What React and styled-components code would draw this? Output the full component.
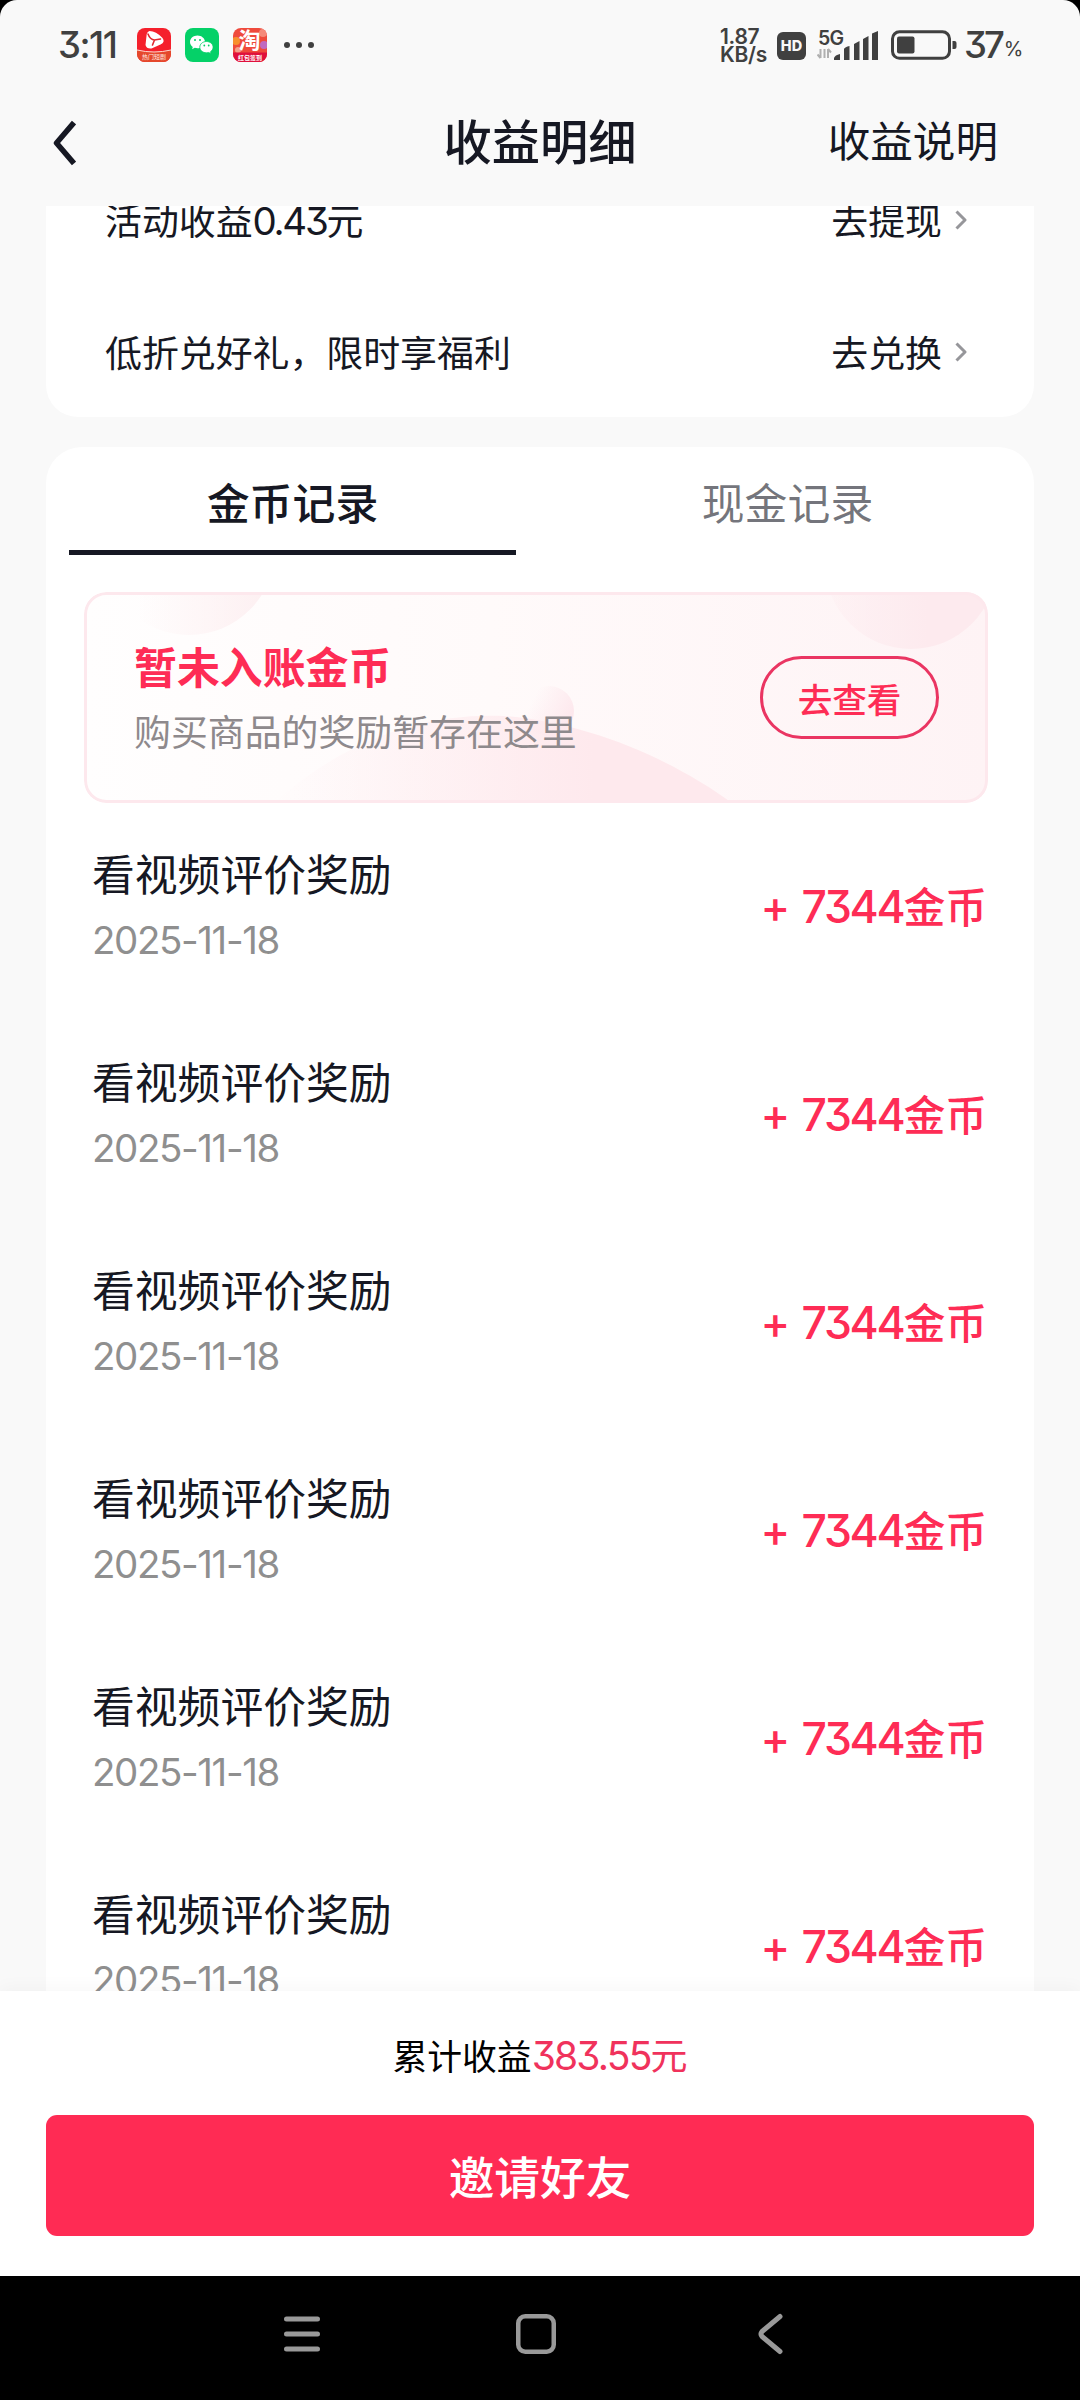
import React from "react";
import styled, { createGlobalStyle, css } from "styled-components";

const CJK = `"Noto Sans CJK SC", sans-serif`;
const LATIN = `Inter, "Noto Sans CJK SC", sans-serif`;
const RED = "#fe2c55";
const INK = "#161823";

const Global = createGlobalStyle`
  *, *::before, *::after { box-sizing: border-box; }
  html, body { margin: 0; padding: 0; background: #000; }
  body { font-family: ${CJK}; color: ${INK}; }
  button { font: inherit; color: inherit; background: none; border: 0; padding: 0; }
`;

const Screen = styled.div`
  width: 1080px;
  height: 2400px;
  display: flex;
  flex-direction: column;
  overflow: hidden;
  background: #f9f9f9;
  clip-path: inset(0 round 17px 17px 0 0);
`;

const Num = styled.span`
  font-family: ${LATIN};
  font-feature-settings: "cv09";
  font-size: ${(p) => p.$size}px;
  letter-spacing: ${(p) => p.$track || 0}px;
  line-height: 0;
`;

const StatusBar = styled.header`
  flex: none;
  height: 90px;
  padding: 0 59px 0 58px;
  display: flex;
  align-items: center;
  color: #404040;
`;

const Clock = styled.div`
  width: 79px;
  font: 500 36.5px/94px ${LATIN};
  font-feature-settings: "cv09";
  letter-spacing: -1.5px;
  white-space: nowrap;
`;

const AppIcons = styled.div`
  display: flex;
  align-items: center;
  gap: 14px;
`;

const Dots = styled.div`
  display: flex;
  gap: 6px;
  margin-left: 17px;
  i { width: 6px; height: 6px; border-radius: 50%; background: #404040; }
`;

const StatusRight = styled.div`
  margin-left: auto;
  display: flex;
  align-items: center;
`;

const Speed = styled.div`
  width: 51px;
  margin-top: 2px;
  font: 600 21px/18px ${LATIN};
  letter-spacing: -0.3px;
  text-align: left;
  white-space: nowrap;
`;

const HdBadge = styled.div`
  width: 29px;
  height: 28px;
  margin: 1px 0 0 6px;
  border-radius: 6px;
  background: #404040;
  color: #f8f8f8;
  font: 800 14.5px/28px ${LATIN};
  text-align: center;
`;

const SignalBox = styled.svg`
  margin: 0 0 0 11px;
`;

const BatteryIcon = styled.svg`
  margin-left: 13px;
`;

const Percent = styled.div`
  margin-left: 7px;
  width: 57px;
  display: flex;
  align-items: baseline;
  font: 500 36.5px/94px ${LATIN};
  font-feature-settings: "cv09";
  letter-spacing: -3px;
  small { font-size: 20px; font-weight: 400; letter-spacing: 0; margin-left: 2px; line-height: 0; position: relative; top: -2px; }
`;

const NavBar = styled.nav`
  flex: none;
  height: 116px;
  padding: 0 82px 0 52px;
  display: grid;
  grid-template-columns: 1fr auto 1fr;
  align-items: start;
`;

const BackButton = styled.button`
  height: 106px;
  display: flex;
  align-items: center;
`;

const NavTitle = styled.h1`
  margin: 0;
  padding-left: 30px;
  font-size: 48.3px;
  font-weight: 500;
  line-height: 99px;
`;

const NavAction = styled.button`
  justify-self: end;
  font-size: 42.6px;
  line-height: 98px;
`;

const Content = styled.main`
  flex: 1;
  min-height: 0;
  padding: 0 46px;
  overflow: hidden;
  display: flex;
  flex-direction: column;
  gap: 30px;
`;

const SummaryCard = styled.section`
  flex: none;
  height: 211px;
  padding: 0 67px 0 59px;
  display: flex;
  flex-direction: column;
  justify-content: flex-end;
  background: #fff;
  border-radius: 0 0 32px 32px;
  overflow: hidden;
`;

const SummaryRow = styled.div`
  flex: none;
  height: 132px;
  display: flex;
  align-items: center;
  justify-content: space-between;
  font-size: 36.9px;
  line-height: 52px;
  white-space: nowrap;
  padding-bottom: 1px;
`;

const RowAction = styled.button`
  display: flex;
  align-items: center;
  gap: 13px;
  svg { margin-top: 2px; }
`;

const RecordsCard = styled.section`
  flex: none;
  padding: 0 46px 0 46px;
  background: #fff;
  border-radius: 36px 36px 0 0;
`;

const Tabs = styled.div`
  display: grid;
  grid-template-columns: 1fr 1fr;
  gap: 48px;
  margin: 0 -23px;
`;

const Tab = styled.button`
  height: 108px;
  font-size: 42.9px;
  line-height: 109px;
  color: rgba(22, 24, 35, 0.6);
  ${(p) =>
    p.$active &&
    css`
      color: ${INK};
      font-weight: 500;
      box-shadow: inset 0 -5px 0 ${INK};
    `}
`;

const Banner = styled.div`
  position: relative;
  height: 211px;
  margin: 37px 0 0 -8px;
  padding: 0 49px 0 50px;
  display: flex;
  align-items: center;
  justify-content: space-between;
  border-radius: 22px;
  overflow: hidden;
`;

const BannerArt = styled.svg`
  position: absolute;
  inset: 0;
`;

const BannerText = styled.div`
  position: relative;
  margin-top: -1px;
`;

const BannerTitle = styled.div`
  font-size: 42.9px;
  font-weight: 700;
  line-height: 66px;
  color: ${RED};
`;

const BannerNote = styled.div`
  font-size: 36.9px;
  line-height: 64px;
  color: #8e898c;
`;

const BannerButton = styled.button`
  position: relative;
  width: 179px;
  height: 83px;
  border: 3px solid #ea3562;
  border-radius: 42px;
  font-size: 34.6px;
  font-weight: 500;
  line-height: 74px;
  color: ${RED};
`;

const Records = styled.ul`
  list-style: none;
  margin: 0;
  padding: 0 1px 0 0;
`;

const Record = styled.li`
  height: 208px;
  display: flex;
  align-items: center;
  justify-content: space-between;
`;

const RecordTitle = styled.div`
  font-size: 42.8px;
  line-height: 61px;
`;

const RecordDate = styled.div`
  height: 69px;
  font: 400 38.5px/74px ${LATIN};
  letter-spacing: -1.4px;
  color: #8f8f8f;
`;

const Amount = styled.div`
  margin-top: -5px;
  font-size: 41.8px;
  font-weight: 500;
  color: ${RED};
  white-space: pre;
  word-spacing: 4px;
`;

const Footer = styled.footer`
  position: relative;
  flex: none;
  height: 285px;
  padding: 0 46px;
  display: flex;
  flex-direction: column;
  background: #fff;
  box-shadow: 0 -4px 16px rgba(0, 0, 0, 0.03);
`;

const Total = styled.div`
  height: 124px;
  font-size: 34.8px;
  line-height: 128px;
  text-align: center;
  color: #000;
  white-space: nowrap;
  em { font-style: normal; font-size: 37px; line-height: 0; color: #f0325c; }
`;

const InviteButton = styled.button`
  height: 121px;
  border-radius: 11px;
  background: #ff2b54;
  color: #fff;
  font-size: 45.7px;
  font-weight: 500;
  line-height: 113px;
`;

const SystemNav = styled.div`
  flex: none;
  height: 124px;
  padding: 0 295px 8px 283px;
  display: grid;
  grid-template-columns: 233px 1fr auto;
  align-items: center;
  background: #000;
`;

const VideoAppIcon = () => (
  <svg width="34" height="34" viewBox="0 0 34 34">
    <rect width="34" height="34" rx="8" fill="#f5202c" />
    <path d="M0 22q17 4 34 0v4a8 8 0 0 1-8 8H8a8 8 0 0 1-8-8z" fill="#e5482c" />
    <path d="M0 22q17 4 34 0" fill="none" stroke="#ffd9d0" strokeWidth="1" />
    <path d="M12.500 3q-3 1-3 5l-1 9q1 4 6 3.500l9-4q5-2.500 2-6.500Q19 3 12.500 3z" fill="#fff" />
    <path d="M11 6q2 5.500 6.500 6l6-1M17.500 12l-2 5" fill="none" stroke="#e02a30" strokeWidth="1.600" strokeLinecap="round" />
    <text x="17" y="31" fontSize="6" textAnchor="middle" fill="#ffe9e0" fontFamily="Noto Sans CJK SC, sans-serif">热门短剧</text>
  </svg>
);

const WeChatIcon = () => (
  <svg width="34" height="34" viewBox="0 0 34 34">
    <rect width="34" height="34" rx="8" fill="#05d168" />
    <path d="M12.500 7.500C8.400 7.500 5 10.300 5 13.900c0 2 1.100 3.800 2.800 5l-.7 2.300 2.700-1.400c.9.200 1.800.4 2.700.4 4.100 0 7.500-2.800 7.500-6.300s-3.400-6.400-7.500-6.400z" fill="#fff" />
    <path d="M21.500 13.500c-3.800 0-6.700 2.500-6.700 5.600s2.900 5.700 6.700 5.700c.8 0 1.500-.1 2.200-.3l2.400 1.200-.6-2c1.600-1.100 2.600-2.700 2.600-4.600 0-3.100-2.900-5.600-6.600-5.600z" fill="#fff" stroke="#05d168" strokeWidth="0.800" />
    <g fill="#05d168">
      <circle cx="10" cy="12" r="1" /><circle cx="15" cy="12" r="1" />
      <circle cx="19.300" cy="17.500" r="0.900" /><circle cx="23.700" cy="17.500" r="0.900" />
    </g>
  </svg>
);

const TaobaoIcon = () => (
  <svg width="34" height="34" viewBox="0 0 34 34">
    <defs><clipPath id="tb"><rect width="34" height="34" rx="8" /></clipPath></defs>
    <g clipPath="url(#tb)">
      <rect width="34" height="34" fill="#ef4a3c" />
      <circle cx="3" cy="13" r="4" fill="#f7902e" /><circle cx="30" cy="5" r="4" fill="#f58a7a" />
      <circle cx="31" cy="17" r="4" fill="#c06ac0" /><circle cx="5" cy="22" r="3" fill="#f4a08a" />
      <rect y="24.500" width="34" height="10" fill="#e0103c" />
    </g>
    <text x="16.500" y="20" fontSize="22" fontWeight="700" textAnchor="middle" fill="#fff" fontFamily="Noto Sans CJK SC, sans-serif">淘</text>
    <text x="17" y="32" fontSize="6" fontWeight="700" textAnchor="middle" fill="#fff" fontFamily="Noto Sans CJK SC, sans-serif">红包签到</text>
  </svg>
);

const Signal = () => (
  <SignalBox width="61" height="34" viewBox="0 0 61 34" fill="#404040">
    <text x="1" y="16.500" fontSize="19.500" fontWeight="600" letterSpacing="-0.8" fontFamily="Inter, sans-serif">5G</text>
    <path d="M3.500 30v-9M7.500 21v9M3.500 30l-3-3.500M11 30v-9M11 21l3 3.500" fill="none" stroke="#b0b0b0" strokeWidth="2" />
    <path d="M17 32v-2q1-3 6-4v6zM27 32V21q1-2 5.500-3v14zM37 32V16l5.500-3v19zM46 32V11l5.500-3v24zM55 32V5.500L61 3v29z" />
  </SignalBox>
);

const Battery = () => (
  <BatteryIcon width="66" height="30" viewBox="0 0 66 30">
    <rect x="1.500" y="1.800" width="57" height="26.500" rx="7" fill="none" stroke="#404040" strokeWidth="3" />
    <rect x="6" y="6.500" width="17.500" height="17" rx="2" fill="#404040" />
    <path d="M61.500 11h2a2 2 0 0 1 2 2v4a2 2 0 0 1-2 2h-2z" fill="#404040" />
  </BatteryIcon>
);

const Chevron = () => (
  <svg width="12" height="20" viewBox="0 0 12 20" fill="none" stroke="#96969a" strokeWidth="3">
    <path d="M1.500 1.500L10 10l-8.500 8.500" strokeLinejoin="round" />
  </svg>
);

const Art = () => (
  <BannerArt width="904" height="211" viewBox="0 0 904 211">
    <defs>
      <linearGradient id="bg"><stop offset="0" stopColor="#fffefe" /><stop offset="0.450" stopColor="#fffafa" /><stop offset="1" stopColor="#fef3f5" /></linearGradient>
      <linearGradient id="c1"><stop offset="0.200" stopColor="#fdeff1" stopOpacity="0" /><stop offset="1" stopColor="#fdeff1" /></linearGradient>
      <linearGradient id="c2"><stop offset="0" stopColor="#fdeaee" stopOpacity="0.200" /><stop offset="0.600" stopColor="#fdeaee" /></linearGradient>
      <linearGradient id="c3" x1="0" y1="0" x2="1" y2="0.500"><stop offset="0.250" stopColor="#fde8ed" stopOpacity="0" /><stop offset="1" stopColor="#fde8ed" /></linearGradient>
      <linearGradient id="c4"><stop offset="0" stopColor="#fee9ed" stopOpacity="0" /><stop offset="0.700" stopColor="#fee9ed" /></linearGradient>
    </defs>
    <rect width="904" height="211" rx="22" fill="url(#bg)" />
    <circle cx="105" cy="-43" r="86" fill="url(#c1)" />
    <circle cx="827" cy="-29" r="86" fill="url(#c2)" />
    <circle cx="465" cy="119" r="25" fill="url(#c3)" />
    <path d="M190 211C270 140 350 121 420 124C500 130 585 165 648 211z" fill="url(#c4)" />
    <rect x="1.500" y="1.500" width="901" height="208" rx="21" fill="none" stroke="#fde8ed" strokeWidth="3" />
  </BannerArt>
);

const summary = [
  { label: <>活动收益<Num $size={38.5} $track={-2.3}>0.43</Num>元</>, action: "去提现" },
  { label: "低折兑好礼，限时享福利", action: "去兑换" },
];

const records = Array.from({ length: 6 }, (_, id) => ({
  id,
  title: "看视频评价奖励",
  date: "2025-11-18",
  amount: "7344",
}));

export default function App() {
  return (
    <>
      <Global />
      <Screen>
        <StatusBar>
          <Clock>3:11</Clock>
          <AppIcons><VideoAppIcon /><WeChatIcon /><TaobaoIcon /></AppIcons>
          <Dots><i /><i /><i /></Dots>
          <StatusRight>
            <Speed>1.87<br />KB/s</Speed>
            <HdBadge>HD</HdBadge>
            <Signal />
            <Battery />
            <Percent>37<small>%</small></Percent>
          </StatusRight>
        </StatusBar>
        <NavBar>
          <BackButton aria-label="返回">
            <svg width="24" height="46" viewBox="0 0 24 46" fill="none" stroke={INK} strokeWidth="5.500">
              <path d="M22 2.500L4.500 23l17.500 20.500" strokeLinejoin="round" />
            </svg>
          </BackButton>
          <NavTitle>收益明细</NavTitle>
          <NavAction>收益说明</NavAction>
        </NavBar>
        <Content>
          <SummaryCard>
            {summary.map((row) => (
              <SummaryRow key={row.action}>
                <span>{row.label}</span>
                <RowAction>{row.action}<Chevron /></RowAction>
              </SummaryRow>
            ))}
          </SummaryCard>
          <RecordsCard>
            <Tabs>
              <Tab $active>金币记录</Tab>
              <Tab>现金记录</Tab>
            </Tabs>
            <Banner>
              <Art />
              <BannerText>
                <BannerTitle>暂未入账金币</BannerTitle>
                <BannerNote>购买商品的奖励暂存在这里</BannerNote>
              </BannerText>
              <BannerButton>去查看</BannerButton>
            </Banner>
            <Records>
              {records.map((r) => (
                <Record key={r.id}>
                  <div>
                    <RecordTitle>{r.title}</RecordTitle>
                    <RecordDate>{r.date}</RecordDate>
                  </div>
                  <Amount><Num $size={44.5} $track={-2.3}>+ {r.amount}</Num>金币</Amount>
                </Record>
              ))}
            </Records>
          </RecordsCard>
        </Content>
        <Footer>
          <Total>累计收益<em><Num $size={39} $track={-1.8}>383.55</Num>元</em></Total>
          <InviteButton>邀请好友</InviteButton>
        </Footer>
        <SystemNav>
          <svg width="38" height="38" viewBox="0 0 38 38" stroke="#999" strokeWidth="5" strokeLinecap="round">
            <path d="M3.500 4h31M3.500 19h31M3.500 34h31" />
          </svg>
          <svg width="40" height="40" viewBox="0 0 40 40" fill="none" stroke="#999" strokeWidth="4.500">
            <rect x="2.250" y="2.250" width="35.500" height="35.500" rx="7" />
          </svg>
          <svg width="27" height="42" viewBox="0 0 27 42" fill="none" stroke="#999" strokeWidth="5" strokeLinecap="round">
            <path d="M22 3.500L4 18.500q-2 2.500 0 5L22 38.500" />
          </svg>
        </SystemNav>
      </Screen>
    </>
  );
}
